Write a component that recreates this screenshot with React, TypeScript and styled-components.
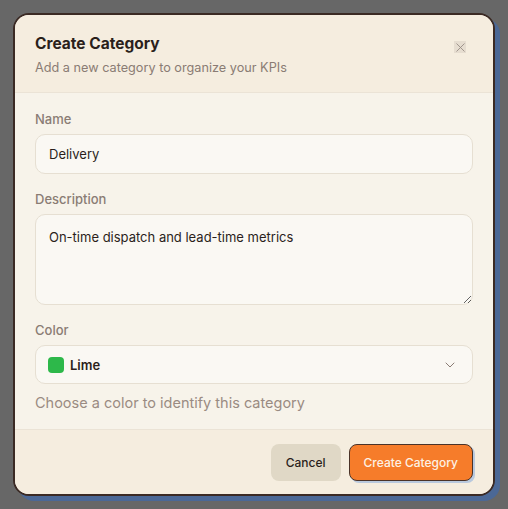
import styled, { createGlobalStyle } from 'styled-components';
import { useState } from 'react';
import { X, ChevronDown } from 'lucide-react';

const GlobalStyle = createGlobalStyle`
  html, body {
    margin: 0;
    padding: 0;
    background: #676767;
  }
  body {
    font-family: Inter, 'Liberation Sans', sans-serif;
  }
  * {
    box-sizing: border-box;
  }
`;

const Backdrop = styled.div`
  width: 508px;
  height: 509px;
  display: flex;
  align-items: flex-start;
  justify-content: flex-start;
  padding: 13px;
`;

const Modal = styled.div`
  width: 482px;
  height: 483px;
  display: flex;
  flex-direction: column;
  border: 2px solid #3b2a24;
  border-radius: 16px;
  background: #f7f3ea;
  box-shadow: 5px 5px 0 #4b6896;
  overflow: hidden;
`;

const Header = styled.div`
  display: flex;
  justify-content: space-between;
  align-items: flex-start;
  padding: 18px 20px 15px;
  background: #f5eddf;
  border-bottom: 1px solid #ebe3d6;
`;

const Title = styled.h2`
  margin: 0;
  font-size: 15.5px;
  font-weight: 700;
  line-height: 22px;
  color: #2b1f1b;
`;

const Subtitle = styled.p`
  margin: 4px 0 0;
  font-size: 12.7px;
  line-height: 18px;
  color: #8a7c74;
`;

const CloseButton = styled.button`
  width: 12px;
  height: 12px;
  margin: 8px 7px 0 0;
  padding: 0;
  border: none;
  background: #e6ddd0;
  color: #978c84;
  display: flex;
  align-items: center;
  justify-content: center;
  overflow: visible;
  cursor: pointer;
`;

const Body = styled.div`
  flex: 1;
  display: flex;
  flex-direction: column;
  padding: 17px 20px 16px;
`;

const Field = styled.div`
  display: flex;
  flex-direction: column;
  gap: 6px;
  margin-bottom: 16px;
`;

const Label = styled.label`
  font-size: 13px;
  font-weight: 500;
  line-height: 18px;
  color: #8a7c74;
`;

const Input = styled.input`
  height: 40px;
  padding: 0 13px;
  border: 1.5px solid #e6dfd2;
  border-radius: 10px;
  background: #faf8f3;
  font-family: inherit;
  font-size: 13px;
  color: #2b1f1b;
  outline: none;
`;

const TextArea = styled.textarea`
  height: 91px;
  padding: 13px 13px;
  border: 1.5px solid #e6dfd2;
  border-radius: 10px;
  background: #faf8f3;
  font-family: inherit;
  font-size: 13px;
  line-height: 18px;
  color: #2b1f1b;
  resize: vertical;
  outline: none;
`;

const Select = styled.button`
  height: 39px;
  padding: 0 14px 0 12px;
  border: 1.5px solid #e6dfd2;
  border-radius: 10px;
  background: #faf8f3;
  display: flex;
  align-items: center;
  gap: 6px;
  font-family: inherit;
  font-size: 13px;
  font-weight: 600;
  color: #2b1f1b;
  cursor: pointer;
`;

const Swatch = styled.span<{ $color: string }>`
  width: 16px;
  height: 16px;
  border-radius: 4px;
  background: ${({ $color }) => $color};
`;

const SelectValue = styled.span`
  flex: 1;
  text-align: left;
`;

const Helper = styled.p`
  margin: -6px 0 0;
  font-size: 14.5px;
  line-height: 18px;
  color: #9a8b82;
`;

const Footer = styled.div`
  display: flex;
  justify-content: flex-end;
  gap: 8px;
  padding: 14px 20px 13px;
  background: #f5eddf;
  border-top: 1px solid #ebe3d6;
`;

const Button = styled.button<{ $primary?: boolean }>`
  height: 37px;
  padding: 0 14px;
  border-radius: 8px;
  border: 1px solid ${({ $primary }) => ($primary ? '#4a3329' : 'transparent')};
  background: ${({ $primary }) => ($primary ? '#f67c2a' : '#e0d8c6')};
  color: ${({ $primary }) => ($primary ? '#fdf1e4' : '#2b1f1b')};
  box-shadow: ${({ $primary }) => ($primary ? '2px 2px 0 #b9c9de' : 'none')};
  font-family: inherit;
  font-size: 12px;
  font-weight: 500;
  cursor: pointer;
`;

export default function App() {
  const [name, setName] = useState('Delivery');
  const [description, setDescription] = useState('On-time dispatch and lead-time metrics');

  return (
    <>
      <GlobalStyle />
      <Backdrop>
        <Modal>
          <Header>
            <div>
              <Title>Create Category</Title>
              <Subtitle>Add a new category to organize your KPIs</Subtitle>
            </div>
            <CloseButton aria-label="Close">
              <X size={15} strokeWidth={1.4} style={{ flexShrink: 0 }} />
            </CloseButton>
          </Header>
          <Body>
            <Field>
              <Label>Name</Label>
              <Input value={name} onChange={(e) => setName(e.target.value)} />
            </Field>
            <Field>
              <Label>Description</Label>
              <TextArea value={description} onChange={(e) => setDescription(e.target.value)} />
            </Field>
            <Field>
              <Label>Color</Label>
              <Select>
                <Swatch $color="#2db84a" />
                <SelectValue>Lime</SelectValue>
                <ChevronDown size={16} color="#8a7c74" strokeWidth={1.5} />
              </Select>
            </Field>
            <Helper>Choose a color to identify this category</Helper>
          </Body>
          <Footer>
            <Button>Cancel</Button>
            <Button $primary>Create Category</Button>
          </Footer>
        </Modal>
      </Backdrop>
    </>
  );
}
